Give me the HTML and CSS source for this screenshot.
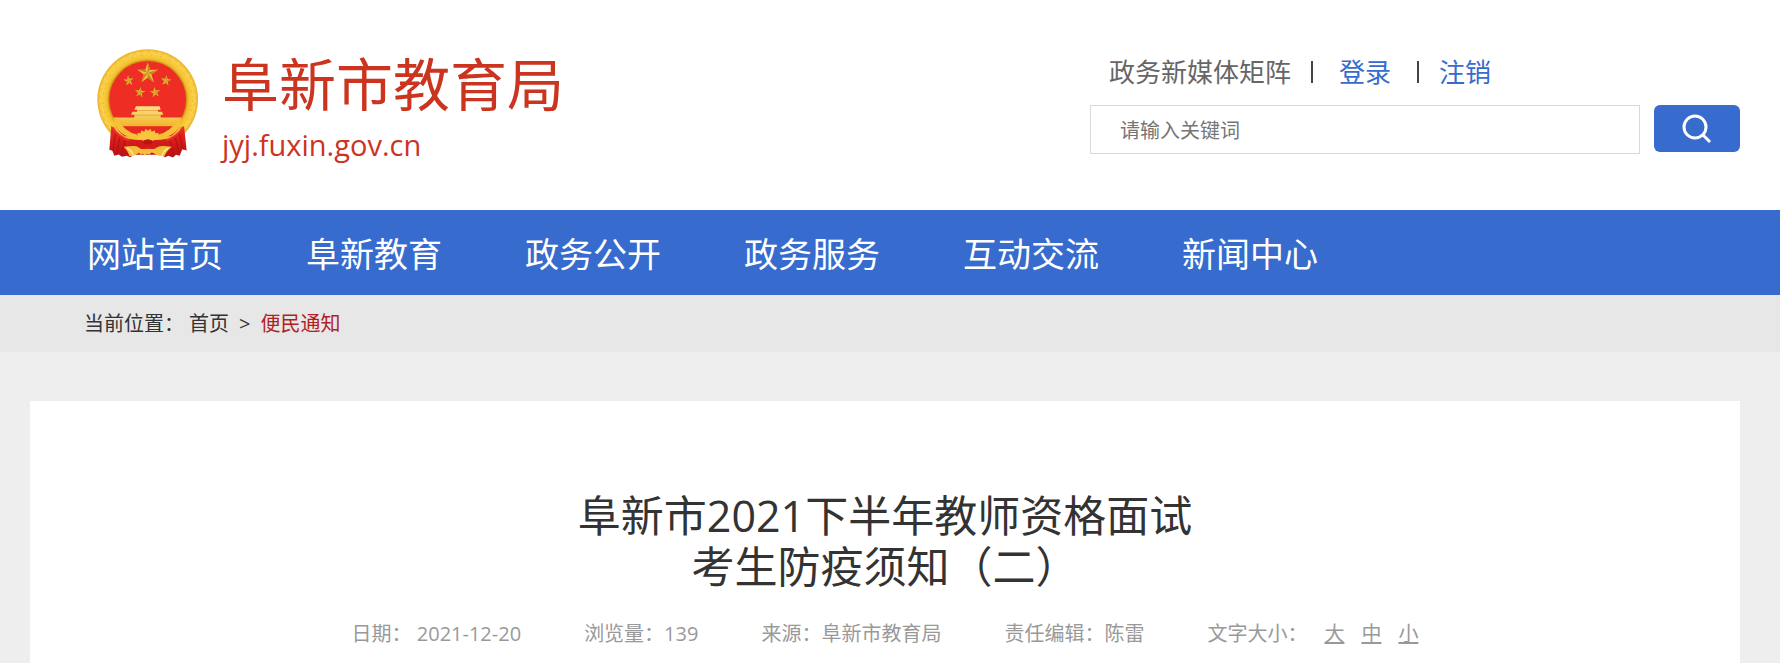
FILE: index.html
```html
<!DOCTYPE html>
<html lang="zh-CN">
<head>
  <meta charset="UTF-8">
  <meta name="viewport" content="width=device-width, initial-scale=1.0">
  <title>阜新市2021下半年教师资格面试考生防疫须知（二）</title>
  <link rel="stylesheet" href="styles.css">
</head>
<body>
  <header class="header">
    <div class="logo">
      <!-- National emblem -->
      <svg class="emblem" viewBox="48 54 312 332" aria-hidden="true">
        <defs>
          <radialGradient id="gold" gradientUnits="userSpaceOnUse" cx="203" cy="208" r="152">
            <stop offset="0.76" stop-color="#c98a12"/>
            <stop offset="0.8" stop-color="#f3bd2c"/>
            <stop offset="0.9" stop-color="#fbd348"/>
            <stop offset="1" stop-color="#e8b02c"/>
          </radialGradient>
          <linearGradient id="gate" x1="0" y1="0" x2="0" y2="1">
            <stop offset="0" stop-color="#fbe08a"/>
            <stop offset="1" stop-color="#f3b52a"/>
          </linearGradient>
          <linearGradient id="cloth" x1="0" y1="0" x2="0" y2="1">
            <stop offset="0" stop-color="#ef2a22"/>
            <stop offset="1" stop-color="#b80f12"/>
          </linearGradient>
          <path id="star" d="M0-30 7-9 30-9 11 5 18 27 0 14-18 27-11 5-30-9-7-9Z"/>
          <path id="shade" d="M0-30 7-9 0 0ZM30-9 11 5 0 0ZM18 27 0 14 0 0ZM-18 27-11 5 0 0ZM-30-9-7-9 0 0Z"/>
        </defs>
        <circle cx="203" cy="208" r="151" fill="url(#gold)"/>
        <circle cx="203" cy="208" r="134" fill="none" stroke="#eab42e" stroke-width="3" stroke-dasharray="7 11 3 8"/>
        <circle cx="203" cy="208" r="143" fill="none" stroke="#ffdc5c" stroke-width="3" stroke-dasharray="9 13"/>
        <circle cx="203" cy="208" r="115" fill="#ee2d24"/>
        <g fill="#f6bd3a">
          <use href="#star" transform="translate(203 128) scale(1.04)"/>
          <use href="#star" transform="translate(146 151) scale(.52) rotate(-8)"/>
          <use href="#star" transform="translate(258 151) scale(.52) rotate(8)"/>
          <use href="#star" transform="translate(180 186) scale(.52) rotate(8)"/>
          <use href="#star" transform="translate(225 186) scale(.52) rotate(-8)"/>
        </g>
        <g fill="#c08a22">
          <use href="#shade" transform="translate(203 128) scale(1.04)"/>
          <use href="#shade" transform="translate(146 151) scale(.52) rotate(-8)"/>
          <use href="#shade" transform="translate(258 151) scale(.52) rotate(8)"/>
          <use href="#shade" transform="translate(180 186) scale(.52) rotate(8)"/>
          <use href="#shade" transform="translate(225 186) scale(.52) rotate(-8)"/>
        </g>
        <path d="M168 228h71l3 11h-8v6h12l4 9h-8v8h56v26H107v-26h56v-8h-10l4-9h14v-6h-8Z" fill="url(#gate)"/>
        <path d="M171 241h64M163 255h80" stroke="#e59a2a" stroke-width="2"/>
        <path d="M107 290h192q-10 18-26 28H133q-17-12-26-28Z" fill="#e82a22"/>
        <path d="M100 262q3 20 10 32 20 26 58 32l6-12q-42-8-64-52ZM306 262q-3 20-10 32-20 26-58 32l-6-12q42-8 64-52Z" fill="#f5c136"/>
        <path d="M94 287q12 22 44 37 30 8 65 4 36 4 65-4 31-14 44-37l8 74-13-4-8 20-11-3-9 8-14-5-10 4-10-7H163l-12 7-11-4-14 3-10-7-13 4-6-15-9-3Z" fill="url(#cloth)"/>
        <path d="M106 312 99 360M119 324 110 372M135 332 124 374M298 312 310 358M286 324 298 370M271 332 282 376" stroke="#b01014" stroke-width="3" fill="none"/>
        <path d="M98 290q16 28 50 40M308 290q-16 28-50 40" stroke="#f23a30" stroke-width="5" fill="none"/>
        <path d="M164 328q4-9 10-12l-2-8 9 2 3-9 9 4 4-9 7 6 7-6 4 9 9-4 3 9 9-2-2 8q7 4 10 12-18-3-25 4h-29q-8-7-26-4Z" fill="#f6c63e"/>
        <path d="M131 350q22-3 38-2 10 4 13 8l42 0q3-5 15-8 18-1 37 2-16 12-22 27-19 4-36-9l-5 0-5 6-7-3-6 5-6-5-7 3-5-6q-14 12-28 10-5-16-18-28Z" fill="#f3bf38"/>
        <path d="M173 350q10-8 20-8h21q10 1 20 8-10 8-21 6-10-4-20 0-12 2-20-6Z" fill="#d91a1a"/>
        <path d="M141 353q17 10 19 24M266 353q-18 10-20 24" stroke="#ffe79a" stroke-width="4" fill="none"/>
        <path d="M190 332q13-9 27 0l-3 10h-21Z" fill="#b9140f"/>
      </svg>
      <div class="site">
        <h1 class="site-name">阜新市教育局</h1>
        <p class="site-url">jyj.fuxin.gov.cn</p>
      </div>
    </div>

    <div class="tools">
      <div class="top-links">
        <a class="media" href="#">政务新媒体矩阵</a>
        <span class="line"></span>
        <a class="login" href="#">登录</a>
        <span class="line"></span>
        <a href="#">注销</a>
      </div>
      <form class="search">
        <input type="text" name="keyword" placeholder="请输入关键词" aria-label="请输入关键词">
        <button type="button" aria-label="搜索">
          <svg viewBox="0 0 28 28" aria-hidden="true">
            <circle cx="12" cy="12" r="11" fill="none" stroke="#fff" stroke-width="3"/>
            <path d="M20 20l7 7" stroke="#fff" stroke-width="3"/>
          </svg>
        </button>
      </form>
    </div>
  </header>

  <nav class="nav">
    <a href="#">网站首页</a>
    <a href="#">阜新教育</a>
    <a href="#">政务公开</a>
    <a href="#">政务服务</a>
    <a href="#">互动交流</a>
    <a href="#">新闻中心</a>
  </nav>

  <div class="position">
    <span class="label">当前位置：</span>
    <a href="#">首页</a>
    <span>&gt;</span>
    <a class="current" href="#">便民通知</a>
  </div>

  <main class="article">
    <h2>阜新市2021下半年教师资格面试<br>考生防疫须知（二）</h2>
    <div class="info">
      <span>日期： 2021-12-20</span>
      <span>浏览量：139</span>
      <span>来源：阜新市教育局</span>
      <span>责任编辑：陈雷</span>
      <div class="font-size">
        <span>文字大小：</span>
        <button type="button">大</button>
        <button type="button">中</button>
        <button type="button">小</button>
      </div>
    </div>
  </main>
</body>
</html>
```
FILE: styles.css
```css
* {
  box-sizing: border-box;
}
body {
  margin: 0;
  font-family: "Open Sans", "Noto Sans CJK SC", sans-serif;
  font-size: 20px;
  color: #333;
  background-color: #eee;
}
h1, h2, p {
  margin: 0;
  font-weight: normal;
}
a {
  color: inherit;
  text-decoration: none;
}
button, input {
  font-family: inherit;
  font-size: 20px;
}

/* header */
.header {
  display: flex;
  justify-content: space-between;
  min-height: 210px;
  padding: 48px 40px 0 96px;
  background-color: #fff;
}
.logo {
  display: flex;
  gap: 22px;
  color: #cb341f;
}
.emblem {
  width: 104px;
  height: 111px;
}
.site-name {
  font-size: 57px;
  line-height: 72px;
}
.site-url {
  font-size: 29px;
  line-height: 50px;
}
.tools {
  width: 650px;
}
.top-links {
  display: flex;
  align-items: center;
  padding-left: 19px;
  font-size: 26px;
  line-height: 48px;
  color: #376bce;
}
.top-links .media {
  color: #666;
}
.top-links .login {
  padding: 0 6px;
}
.line {
  width: 2px;
  height: 22px;
  margin: 0 20px;
  background-color: #444;
}
.search {
  display: flex;
  gap: 14px;
  margin-top: 9px;
}
.search input {
  flex: 1;
  height: 49px;
  padding: 2px 29px 0;
  border: 1px solid #d9d9d9;
  outline: none;
}
.search input::placeholder {
  color: #757575;
}
.search button {
  display: flex;
  align-items: center;
  justify-content: center;
  width: 86px;
  height: 47px;
  padding: 0;
  border: none;
  border-radius: 6px;
  background-color: #376bce;
  cursor: pointer;
}
.search svg {
  width: 28px;
  height: 28px;
  overflow: visible;
}

/* nav */
.nav {
  display: flex;
  gap: 83px;
  padding: 3px 0 0 87px;
  font-size: 34px;
  line-height: 82px;
  color: #fff;
  background-color: #376bce;
}

.position {
  display: flex;
  gap: 10px;
  padding: 1px 0 0 84px;
  line-height: 56px;
  background-color: #e7e7e7;
}
.position .label {
  margin-right: -5px;
}
.position .current {
  color: #b01f24;
}

/* article */
.article {
  min-height: 262px;
  margin: 49px 40px 0 30px;
  padding-top: 89px;
  text-align: center;
  background-color: #fff;
}
.article h2 {
  font-size: 43px;
  line-height: 51px;
}
.info {
  display: flex;
  justify-content: center;
  gap: 63px;
  margin-top: 27px;
  line-height: 30px;
  color: #999;
}
.font-size {
  display: flex;
  gap: 17px;
}
.font-size button {
  padding: 0;
  border: none;
  line-height: 30px;
  color: #999;
  background: none;
  text-decoration: underline;
  cursor: pointer;
}
```
